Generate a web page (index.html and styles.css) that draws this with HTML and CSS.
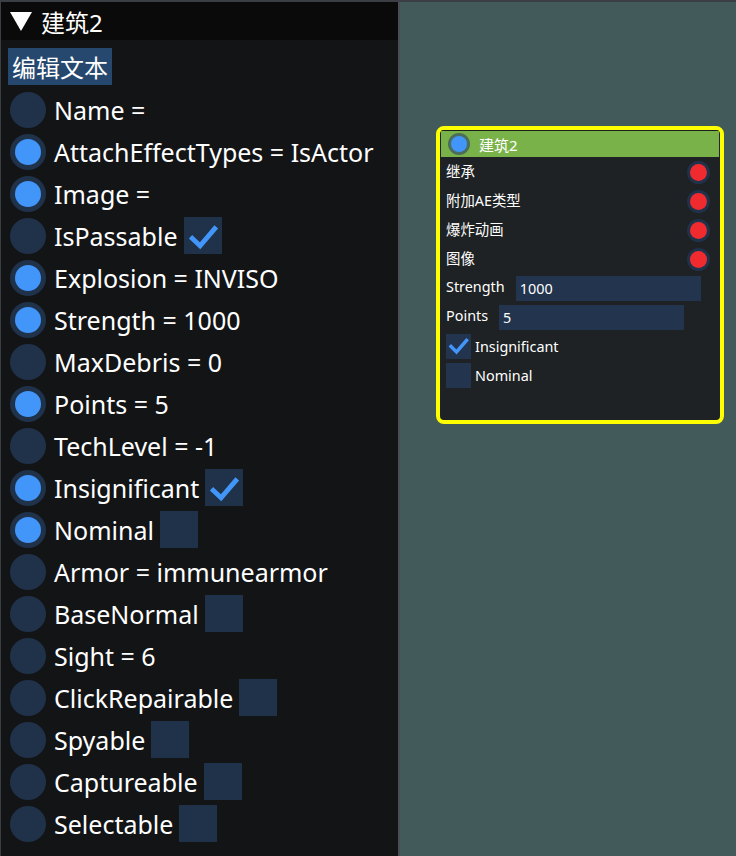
FILE: index.html
```html
<!DOCTYPE html>
<html>
<head>
<meta charset="utf-8">
<link rel="stylesheet" href="styles.css">
</head>
<body>
<div class="app">
  <div class="panel">
    <div class="titlebar"><svg class="tri" viewBox="0 0 22 19"><polygon points="0,0 22,0 11,19" /></svg><span class="title">建筑2</span></div>
    <div class="content">
      <div class="selected">编辑文本</div>
      <div class="list">
        <div class="row"><span class="dot"></span><span class="lbl">Name =</span></div>
        <div class="row"><span class="dot on"></span><span class="lbl">AttachEffectTypes = IsActor</span></div>
        <div class="row"><span class="dot on"></span><span class="lbl">Image =</span></div>
        <div class="row"><span class="dot"></span><span class="lbl">IsPassable</span><span class="box"><svg viewBox="0 0 38 38"><path d="M8 22 L16 29.5 L31 12" /></svg></span></div>
        <div class="row"><span class="dot on"></span><span class="lbl">Explosion = INVISO</span></div>
        <div class="row"><span class="dot on"></span><span class="lbl">Strength = 1000</span></div>
        <div class="row"><span class="dot"></span><span class="lbl">MaxDebris = 0</span></div>
        <div class="row"><span class="dot on"></span><span class="lbl">Points = 5</span></div>
        <div class="row"><span class="dot"></span><span class="lbl">TechLevel = -1</span></div>
        <div class="row"><span class="dot on"></span><span class="lbl">Insignificant</span><span class="box"><svg viewBox="0 0 38 38"><path d="M8 22 L16 29.5 L31 12" /></svg></span></div>
        <div class="row"><span class="dot on"></span><span class="lbl">Nominal</span><span class="box"></span></div>
        <div class="row"><span class="dot"></span><span class="lbl">Armor = immunearmor</span></div>
        <div class="row"><span class="dot"></span><span class="lbl">BaseNormal</span><span class="box"></span></div>
        <div class="row"><span class="dot"></span><span class="lbl">Sight = 6</span></div>
        <div class="row"><span class="dot"></span><span class="lbl">ClickRepairable</span><span class="box"></span></div>
        <div class="row"><span class="dot"></span><span class="lbl">Spyable</span><span class="box"></span></div>
        <div class="row"><span class="dot"></span><span class="lbl">Captureable</span><span class="box"></span></div>
        <div class="row"><span class="dot"></span><span class="lbl">Selectable</span><span class="box"></span></div>
      </div>
    </div>
  </div>
  <div class="canvas">
    <div class="node">
      <div class="nhead"><span class="hdot"></span><span class="htitle">建筑2</span></div>
      <div class="nbody">
        <div class="nrow"><span class="ntext lift">继承</span><span class="pin"></span></div>
        <div class="nrow"><span class="ntext lift">附加AE类型</span><span class="pin"></span></div>
        <div class="nrow"><span class="ntext lift">爆炸动画</span><span class="pin"></span></div>
        <div class="nrow"><span class="ntext lift">图像</span><span class="pin"></span></div>
        <div class="nrow"><span class="ntext lift">Strength</span><span class="input w-strength">1000</span></div>
        <div class="nrow"><span class="ntext lift">Points</span><span class="input w-points">5</span></div>
        <div class="nrow"><span class="nbox"><svg viewBox="0 0 25 25"><path d="M5 12.5 L10.5 18 L20.5 6.5" /></svg></span><span class="ntext">Insignificant</span></div>
        <div class="nrow"><span class="nbox"></span><span class="ntext">Nominal</span></div>
      </div>
    </div>
  </div>
</div>
</body>
</html>
```
FILE: styles.css
```css
* { box-sizing: border-box; }
html, body { margin: 0; padding: 0; }
body {
  width: 736px;
  height: 856px;
  overflow: hidden;
  background: #435a5b;
  font-family: "Noto Sans", "Noto Sans CJK SC", sans-serif;
  color: #ffffff;
}
.app {
  display: flex;
  height: 856px;
  border-top: 2px solid #3c3e46;
}
.panel {
  width: 400px;
  flex: none;
  background: #131416;
  border-left: 1px solid #3c3e46;
  border-right: 2px solid #4a4c56;
  display: flex;
  flex-direction: column;
}
.titlebar {
  height: 38px;
  background: #0a0a0a;
  display: flex;
  align-items: center;
  padding-left: 9px;
  gap: 9px;
}
.tri { width: 22px; height: 19px; fill: #ffffff; display: block; }
.title { font-size: 24px; font-family: "Noto Sans", "Noto Sans CJK SC", sans-serif; }
.content {
  padding: 8px 0 0 7px;
}
.selected {
  display: inline-block;
  background: #26486e;
  height: 37px;
  line-height: 37px;
  padding: 0 4px;
  font-size: 24px;
  font-family: "Noto Sans CJK SC", sans-serif;
}
.list {
  display: flex;
  flex-direction: column;
  gap: 5px;
  margin-top: 6px;
}
.row {
  height: 37px;
  display: flex;
  align-items: center;
  font-size: 25px;
}
.dot {
  width: 36px;
  height: 36px;
  border-radius: 50%;
  background: #1f324a;
  margin-left: 2px;
  margin-right: 8px;
  flex: none;
  display: flex;
  align-items: center;
  justify-content: center;
}
.dot.on::after {
  content: "";
  width: 26px;
  height: 26px;
  border-radius: 50%;
  background: #4296fa;
}
.lbl { white-space: nowrap; }
.box {
  width: 38px;
  height: 37px;
  background: #1f324a;
  margin-left: 6px;
  flex: none;
}
.box svg, .nbox svg { width: 100%; height: 100%; display: block; }
.box path { fill: none; stroke: #4296fa; stroke-width: 5; stroke-linecap: square; }
.nbox path { fill: none; stroke: #4296fa; stroke-width: 3.5; stroke-linecap: square; }

.canvas {
  flex: 1;
  position: relative;
}
.node {
  position: absolute;
  left: 36px;
  top: 124px;
  width: 288px;
  height: 298px;
  border: 4px solid #ffff00;
  border-radius: 8px;
  background: #1e2224;
  overflow: hidden;
}
.nhead {
  height: 27px;
  background: #7ab24a;
  border-top: 1px solid #1a1f1c;
  margin: 0 1px;
  display: flex;
  align-items: center;
  padding-left: 7px;
  gap: 9px;
}
.hdot {
  width: 22px;
  height: 22px;
  border-radius: 50%;
  background: #4a6d5c;
  display: flex;
  align-items: center;
  justify-content: center;
}
.hdot::after {
  content: "";
  width: 16px;
  height: 16px;
  border-radius: 50%;
  background: #4296fa;
}
.htitle { font-size: 15px; }
.nbody {
  padding: 3px 0 0 6px;
  display: flex;
  flex-direction: column;
  gap: 4px;
}
.nrow {
  height: 25px;
  display: flex;
  align-items: center;
  font-size: 14.4px;
}
.ntext { white-space: nowrap; }
.ntext.lift { margin-bottom: 4px; }
.pin {
  margin-left: auto;
  margin-right: 10px;
  width: 23px;
  height: 23px;
  border-radius: 50%;
  background: #1f324a;
  display: flex;
  align-items: center;
  justify-content: center;
}
.pin::after {
  content: "";
  width: 17px;
  height: 17px;
  border-radius: 50%;
  background: #ef2b2f;
}
.input {
  height: 25px;
  background: #22344e;
  margin-left: 11px;
  padding-left: 4px;
  line-height: 25px;
  font-size: 14.4px;
}
.w-strength { width: 185px; }
.w-points { width: 185px; }
.nbox {
  width: 25px;
  height: 25px;
  background: #22344e;
  margin-right: 4px;
  flex: none;
}
```
